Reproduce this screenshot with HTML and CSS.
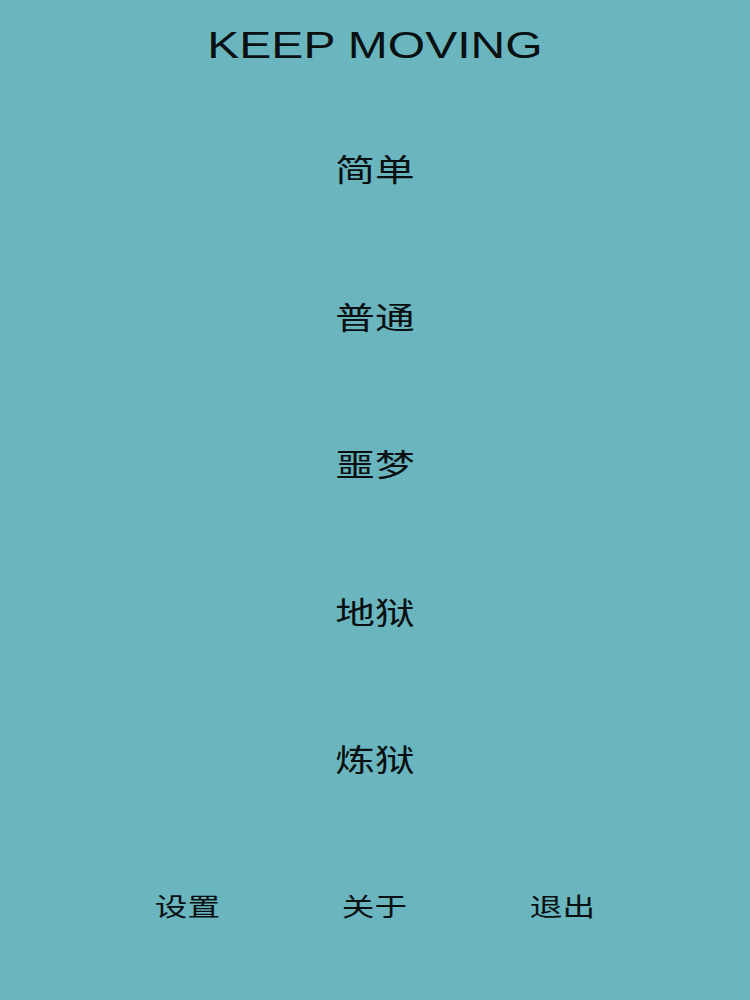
FILE: index.html
```html
<!DOCTYPE html>
<html lang="zh-CN">
<head>
<meta charset="utf-8">
<title>KEEP MOVING</title>
<link rel="stylesheet" href="styles.css">
</head>
<body>
<div class="screen">
  <header class="title"><span class="stretch">KEEP MOVING</span></header>
  <ul class="modes">
    <li class="mode"><span class="stretch">简单</span></li>
    <li class="mode"><span class="stretch">普通</span></li>
    <li class="mode"><span class="stretch">噩梦</span></li>
    <li class="mode"><span class="stretch">地狱</span></li>
    <li class="mode"><span class="stretch">炼狱</span></li>
  </ul>
  <nav class="actions">
    <div class="action"><span class="stretch">设置</span></div>
    <div class="action"><span class="stretch">关于</span></div>
    <div class="action"><span class="stretch">退出</span></div>
  </nav>
</div>
</body>
</html>
```
FILE: styles.css
```css
html, body {
  margin: 0;
  padding: 0;
}
body {
  background: #6bb5be;
  color: #081012;
  font-family: "Noto Sans CJK SC", "Liberation Sans", sans-serif;
}
.screen {
  width: 750px;
  height: 1000px;
  display: flex;
  flex-direction: column;
}
.stretch {
  display: inline-block;
  transform: scaleX(1.28);
}
.title {
  height: 92px;
  line-height: 90px;
  text-align: center;
  font-family: "Liberation Sans", sans-serif;
  font-size: 37.5px;
}
.modes {
  list-style: none;
  margin: 0;
  padding: 2px 0 0;
}
.mode {
  height: 147.5px;
  display: flex;
  align-items: center;
  justify-content: center;
  font-size: 31px;
}
.actions {
  margin-top: 53px;
  padding: 0 93.75px;
  display: grid;
  grid-template-columns: repeat(3, 1fr);
  height: 40px;
  align-items: center;
}
.action {
  text-align: center;
  font-size: 25.5px;
}
```
